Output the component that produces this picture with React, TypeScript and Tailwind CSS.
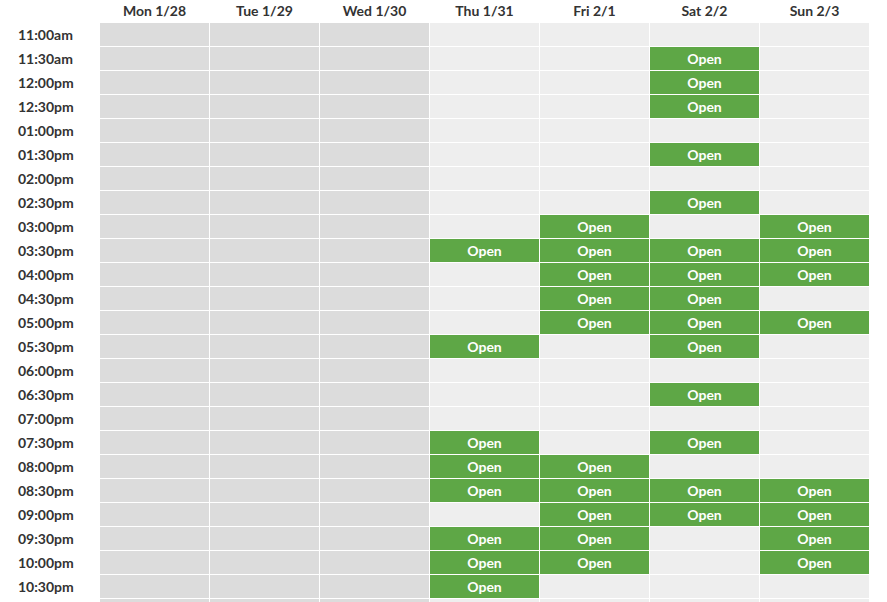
import React from "react";

const days = ["Mon 1/28", "Tue 1/29", "Wed 1/30", "Thu 1/31", "Fri 2/1", "Sat 2/2", "Sun 2/3"];
const times = [
  "11:00am", "11:30am", "12:00pm", "12:30pm", "01:00pm", "01:30pm", "02:00pm", "02:30pm",
  "03:00pm", "03:30pm", "04:00pm", "04:30pm", "05:00pm", "05:30pm", "06:00pm", "06:30pm",
  "07:00pm", "07:30pm", "08:00pm", "08:30pm", "09:00pm", "09:30pm", "10:00pm", "10:30pm", "",
];

const open: Record<number, string[]> = {
  3: ["03:30pm", "05:30pm", "07:30pm", "08:00pm", "08:30pm", "09:30pm", "10:00pm", "10:30pm"],
  4: ["03:00pm", "03:30pm", "04:00pm", "04:30pm", "05:00pm", "08:00pm", "08:30pm", "09:00pm", "09:30pm", "10:00pm"],
  5: ["11:30am", "12:00pm", "12:30pm", "01:30pm", "02:30pm", "03:30pm", "04:00pm", "04:30pm", "05:00pm", "05:30pm", "06:30pm", "07:30pm", "08:30pm", "09:00pm"],
  6: ["03:00pm", "03:30pm", "04:00pm", "05:00pm", "08:30pm", "09:00pm", "09:30pm", "10:00pm"],
};

export default function App() {
  return (
    <div
      className="w-[887px] h-[602px] overflow-hidden bg-white"
      style={{ fontFamily: "Lato, 'Noto Sans', sans-serif" }}
    >
      <div className="flex h-[23px] items-center">
        <div className="w-[100px] shrink-0" />
        <div className="flex gap-px">
          {days.map((d) => (
            <div key={d} className="w-[109px] text-center text-[14px] font-bold text-[#333] leading-none pb-[1px]">
              {d}
            </div>
          ))}
        </div>
      </div>
      <div className="flex flex-col gap-px">
        {times.map((t, r) => (
          <div key={r} className="flex h-[23px]">
            <div className="w-[100px] shrink-0 pl-[18px] flex items-center text-[14px] font-bold text-[#333]">
              {t}
            </div>
            <div className="flex gap-px">
              {days.map((d, i) => {
                const isOpen = t !== "" && open[i]?.includes(t);
                const bg = i < 3 ? "bg-[#dcdcdc]" : isOpen ? "bg-[#5ea746]" : "bg-[#eeeeee]";
                return (
                  <div
                    key={d}
                    className={`w-[109px] h-[23px] flex items-center justify-center text-[14px] font-bold text-white ${bg}`}
                  >
                    {isOpen ? "Open" : ""}
                  </div>
                );
              })}
            </div>
          </div>
        ))}
      </div>
    </div>
  );
}
